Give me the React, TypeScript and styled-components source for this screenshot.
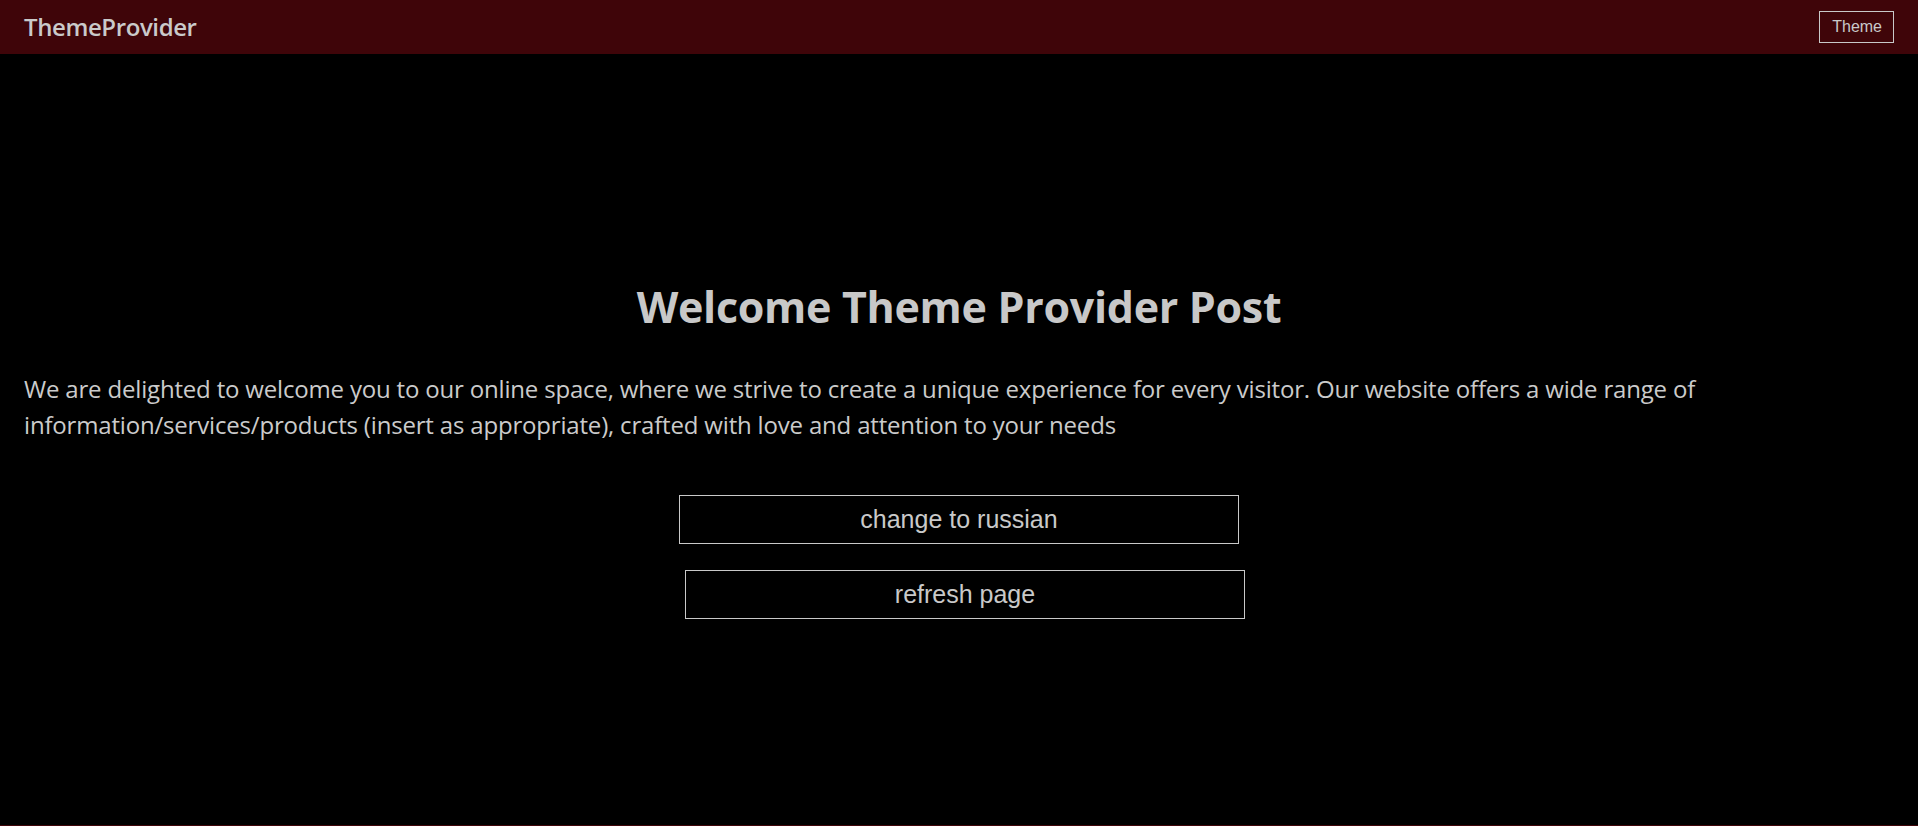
import React, { useState } from 'react';
import styled, { createGlobalStyle } from 'styled-components';

const GlobalStyle = createGlobalStyle`
  html, body {
    margin: 0;
    padding: 0;
    background: #000;
  }
  #root {
    min-height: 100vh;
  }
`;

const PageLayout = styled.div`
  display: flex;
  flex-direction: column;
  min-height: 826px;
  background: #000;
  color: #c9c9c9;
  font-family: 'Open Sans', 'Noto Sans', sans-serif;
  border-bottom: 1px solid #400509;
  box-sizing: border-box;
`;

const HeaderLayout = styled.header`
  display: flex;
  align-items: center;
  justify-content: space-between;
  height: 54px;
  padding: 0 24px;
  background: #3f0509;
  box-sizing: border-box;
`;

const Logo = styled.div`
  font-size: 24px;
  font-weight: 600;
  letter-spacing: -0.4px;
  color: #cacaca;
  margin-top: -2px;
`;

const ThemeButton = styled.button`
  font-family: 'Liberation Sans', Arial, sans-serif;
  font-size: 16px;
  line-height: 18px;
  color: #c9c9c9;
  background: transparent;
  border: 1px solid #c9c9c9;
  padding: 6px 11px 6px 12px;
  margin-top: -1px;
  cursor: pointer;
`;

const MainLayout = styled.main`
  display: flex;
  flex-direction: column;
  align-items: center;
  flex: 1;
  padding: 0 24px;
`;

const Title = styled.h1`
  margin: 228px 0 0;
  font-size: 43px;
  line-height: 50px;
  font-weight: 700;
  letter-spacing: -0.3px;
  color: #c8c8c8;
`;

const Text = styled.p`
  align-self: stretch;
  margin: 39px 0 0;
  font-size: 24px;
  line-height: 36px;
  letter-spacing: -0.18px;
  color: #cbcbcb;
`;

const ActionButton = styled.button<{ $shift?: number; $top: number }>`
  width: 560px;
  height: 49px;
  margin: ${(p) => p.$top}px 0 0 ${(p) => (p.$shift ?? 0) * 2}px;
  font-family: 'Liberation Sans', Arial, sans-serif;
  font-size: 25px;
  color: #c9c9c9;
  background: #000;
  border: 1px solid #c9c9c9;
  cursor: pointer;
`;

const texts = {
  en: {
    title: 'Welcome Theme Provider Post',
    body: 'We are delighted to welcome you to our online space, where we strive to create a unique experience for every visitor. Our website offers a wide range of information/services/products (insert as appropriate), crafted with love and attention to your needs',
    change: 'change to russian',
  },
  ru: {
    title: 'Добро пожаловать в Theme Provider Post',
    body: 'Мы рады приветствовать вас в нашем онлайн-пространстве, где мы стремимся создать уникальный опыт для каждого посетителя. Наш сайт предлагает широкий спектр информации/услуг/продуктов (вставьте нужное), созданных с любовью и вниманием к вашим потребностям',
    change: 'change to english',
  },
};

function App(): JSX.Element {
  const [lang, setLang] = useState<'en' | 'ru'>('en');
  const t = texts[lang];

  return (
    <>
      <GlobalStyle />
      <PageLayout>
        <HeaderLayout>
          <Logo>ThemeProvider</Logo>
          <ThemeButton>Theme</ThemeButton>
        </HeaderLayout>
        <MainLayout>
          <Title>{t.title}</Title>
          <Text>{t.body}</Text>
          <ActionButton $top={52} onClick={() => setLang(lang === 'en' ? 'ru' : 'en')}>
            {t.change}
          </ActionButton>
          <ActionButton $top={26} $shift={6} onClick={() => window.location.reload()}>
            refresh page
          </ActionButton>
        </MainLayout>
      </PageLayout>
    </>
  );
}

export default App;
